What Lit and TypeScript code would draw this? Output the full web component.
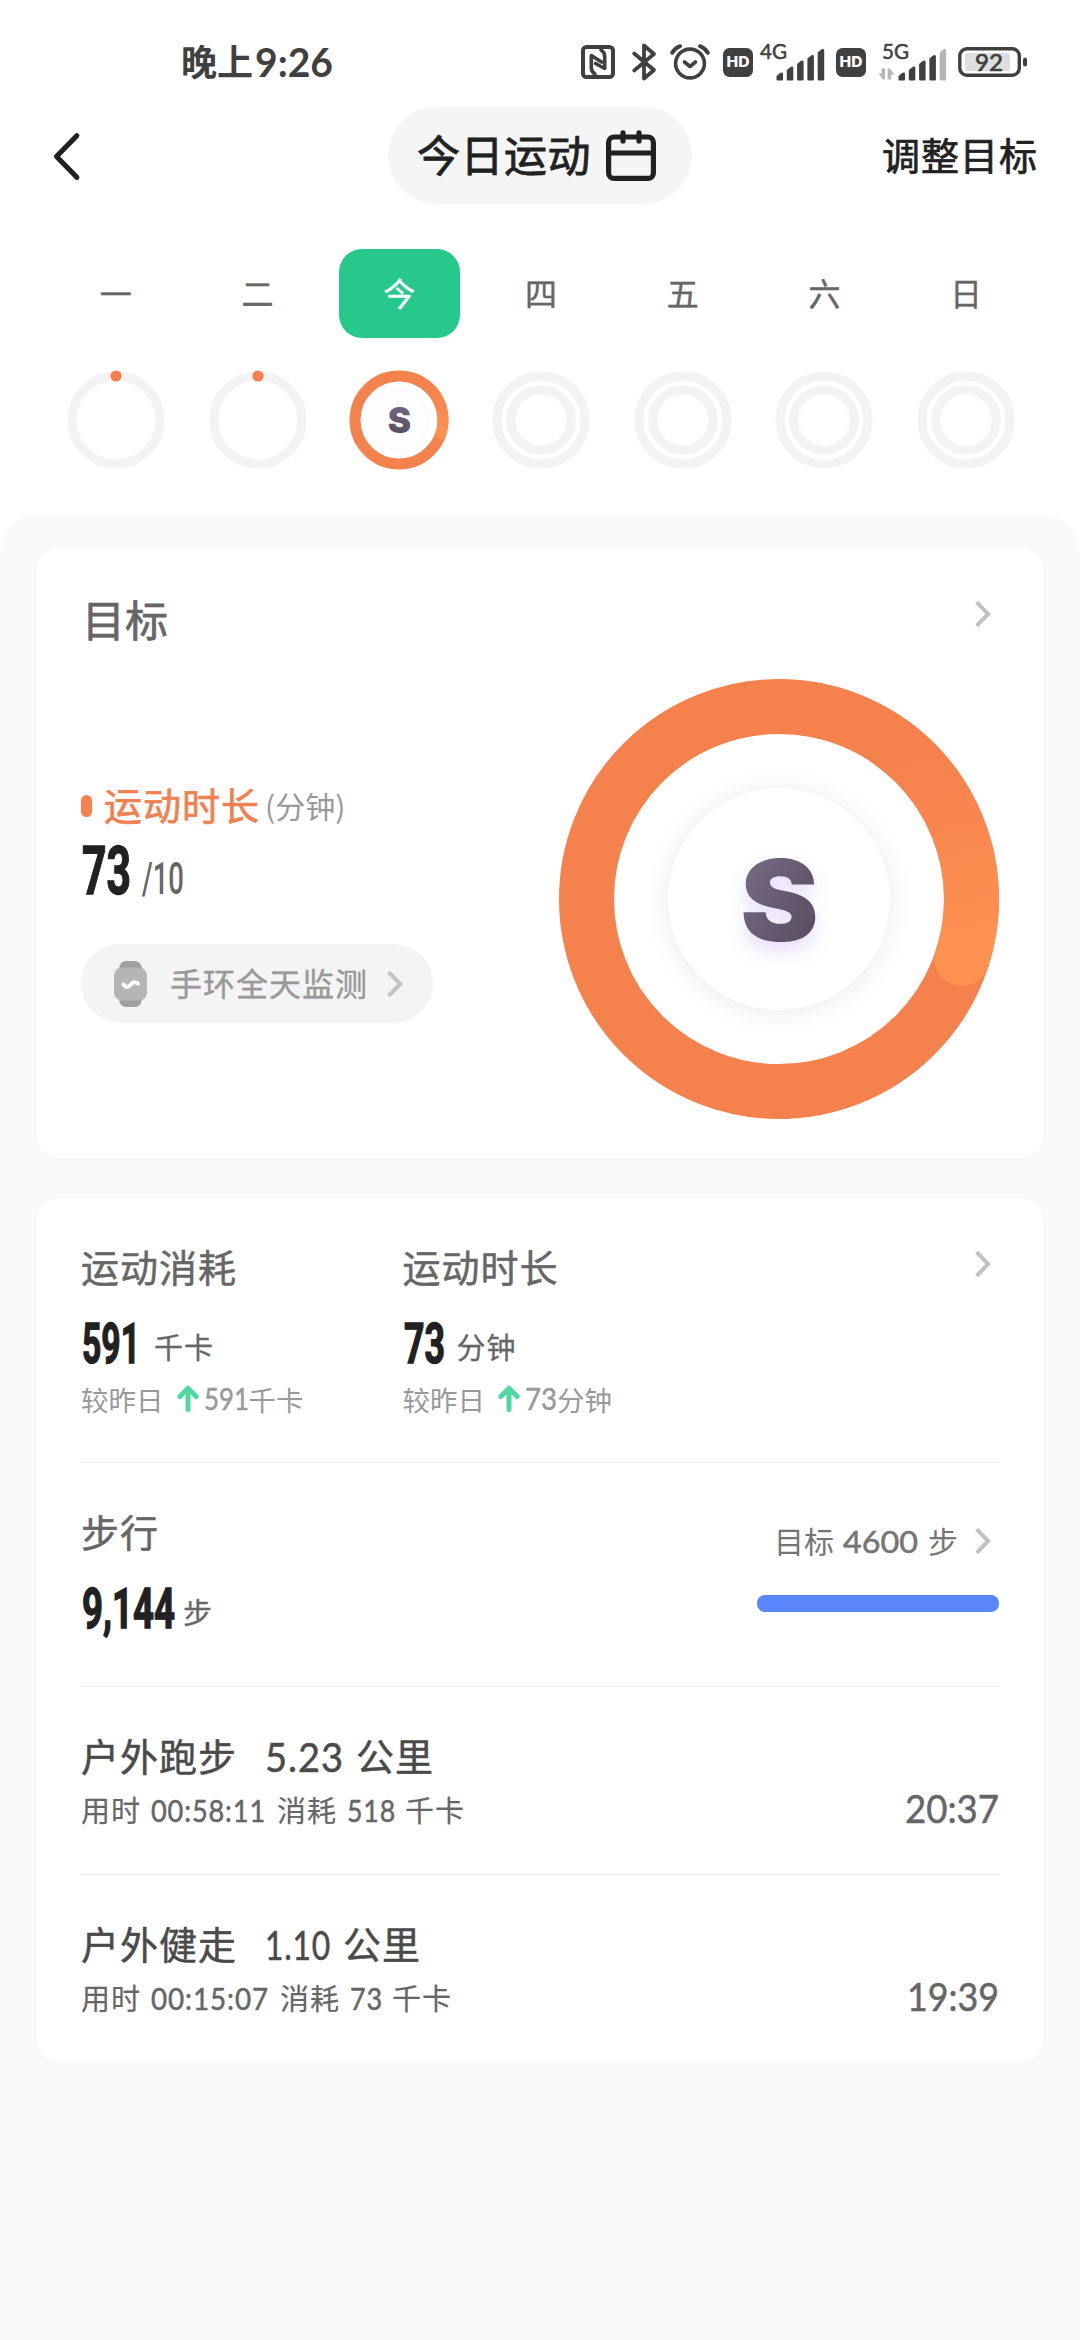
import { LitElement, html, css, svg, nothing } from "lit";
import { customElement, property } from "lit/decorators.js";

/** Digits drawn at an exact cap height and advance width. */
@customElement("fit-num")
class FitNum extends LitElement {
  @property() text = "";
  @property({ type: Number }) w = 0;
  @property({ type: Number }) h = 0;
  @property() face = "lato";
  static styles = css`
    :host { display: block; flex: none; }
    svg { display: block; overflow: visible; }
    text { fill: currentColor; }
    .lato { font-family: Lato, "Noto Sans CJK SC", sans-serif; font-weight: 400; stroke: currentColor; stroke-width: 0.5; }
    .bold { font-family: Lato, "Noto Sans CJK SC", sans-serif; font-weight: 700; }
    .din { font-family: Roboto, "Liberation Sans", sans-serif; font-weight: 700; stroke: currentColor; stroke-width: 1.4; }
    .thin { font-family: Roboto, "Liberation Sans", sans-serif; font-weight: 500; }
  `;
  render() {
    const ratio = this.face === "lato" || this.face === "bold" ? 0.725 : 0.711;
    const squeeze = this.face === "din" ? 0.62 : this.face === "thin" ? 0.66 : 1;
    return html`<svg width=${this.w} height=${this.h}>
      <text class=${this.face} x="0" y=${this.h} font-size=${this.h / ratio} transform="scale(${squeeze} 1)"
        textLength=${this.w / squeeze} lengthAdjust="spacingAndGlyphs">${this.text}</text>
    </svg>`;
  }
}

const num = (text: string, w: number, h: number, face = "lato") =>
  html`<fit-num .text=${text} .w=${w} .h=${h} .face=${face}></fit-num>`;

const chevron = html`<svg class="chev" width="20" height="30" viewBox="0 0 20 30">
  <path d="M3.600 3.200 15.200 15 3.600 26.800" fill="none" stroke="#c2c2c2" stroke-width="4" /></svg>`;

const arrowUp = html`<svg class="up" width="22" height="28" viewBox="0 0 22 28">
  <path d="M11 24.500V4M2.800 11.500 11 3.200l8.200 8.300" fill="none" stroke="#4fd8a4" stroke-width="5" stroke-linecap="round" stroke-linejoin="round" /></svg>`;

const hd = html`<svg class="hd" width="30" height="29" viewBox="0 0 30 29">
  <rect width="30" height="29" rx="6.500" fill="#404040" />
  <text x="3.600" y="19.300" font-family="Inter, Roboto, sans-serif" font-weight="800" font-size="14.500" fill="#fff" textLength="23" lengthAdjust="spacingAndGlyphs">HD</text></svg>`;

const signal = (label: string, lastOff: boolean, textX: number) => html`<svg class="sig" width="68" height="38" viewBox="0 0 68 38">
  <text x=${textX} y="16" font-family="Lato, sans-serif" font-weight="400" font-size="20.500" fill="#404040" stroke="#404040" stroke-width=".5" textLength="27" lengthAdjust="spacingAndGlyphs">${label}</text>
  ${[0, 1, 2, 3, 4].map((i) => {
    const x = 19.500 + i * 10.300;
    const top = [30, 24, 18, 12.500, 6.500][i];
    return svg`<path d="M${x} 36.500V${top + 3}l4-3.200q2.500-.8 2.500 1.200V36.500q0 1-1 1h-4.500q-1 0-1-1z" fill=${lastOff && i === 4 ? "#b5b5b5" : "#404040"} />`;
  })}
  ${lastOff
    ? svg`<path d="M6 25.500v11h-2l-4.500-6h3v-5zM8.700 36.500v-11h2l4.800 6h-3.300v5z" fill="#b5b5b5" />`
    : nothing}
</svg>`;

const ringS = (size: number) => html`<svg class="ring" width=${size} height=${size} viewBox="0 0 440 440">
  <defs>
    <linearGradient id="sg" x1="0" y1="0" x2="1" y2="1"><stop offset="0" stop-color="#7a7089" /><stop offset="1" stop-color="#54485a" /></linearGradient>
    <linearGradient id="rg" gradientUnits="userSpaceOnUse" x1="345" y1="80" x2="395" y2="280"><stop offset="0" stop-color="#f5814d" /><stop offset="1" stop-color="#ff9251" /></linearGradient>
    <filter id="soft" x="-30%" y="-30%" width="160%" height="160%"><feGaussianBlur stdDeviation="12" /></filter>
    <filter id="glow" x="-60%" y="-60%" width="220%" height="220%"><feDropShadow dx="0" dy="9" stdDeviation="9" flood-color="#8a5cf0" flood-opacity=".2" /></filter>
  </defs>
  <circle cx="220" cy="220" r="192.500" fill="none" stroke="#f5814d" stroke-width="55" />
  <path d="M333.100 64.300 A192.500 192.500 0 0 1 403.100 279.500" fill="none" stroke="url(#rg)" stroke-width="55" />
  <circle cx="403.100" cy="279.500" r="27.500" fill="#ff9251" />
  <circle cx="220" cy="222" r="113" fill="#000" opacity=".07" filter="url(#soft)" />
  <circle cx="220" cy="220" r="111" fill="#fff" />
  <g filter="url(#glow)"><text transform="translate(220.500 261.500) scale(1.050 1)" text-anchor="middle" font-family="Inter, 'Liberation Sans', sans-serif" font-weight="900" font-size="112" fill="url(#sg)">S</text></g>
</svg>`;

const dayRing = (kind: string) => {
  if (kind === "today")
    return html`<svg class="dr" width="100" height="100" viewBox="0 0 100 100">
      <defs><linearGradient id="dg" x1="0" y1="0" x2="0" y2="1"><stop offset="0" stop-color="#766c84" /><stop offset="1" stop-color="#55495c" /></linearGradient>
      <linearGradient id="da" x1="0" y1="0" x2="0" y2="1"><stop offset="0" stop-color="#f5814d" /><stop offset="1" stop-color="#ff9251" /></linearGradient></defs>
      <circle cx="50" cy="50" r="44" fill="none" stroke="#f5814d" stroke-width="11" />
      <path d="M76 14.500A44 44 0 0 1 91.800 63.600" fill="none" stroke="url(#da)" stroke-width="11" />
      <circle cx="91.800" cy="63.600" r="5.500" fill="#ff9251" />
      <circle cx="50" cy="50" r="29.500" fill="#fefdff" stroke="#faf9fb" stroke-width="1.500" />
      <text x="50.500" y="63" text-anchor="middle" font-family="Inter, 'Liberation Sans', sans-serif" font-weight="900" font-size="35" fill="url(#dg)">S</text></svg>`;
  return html`<svg class="dr" width="100" height="100" viewBox="0 0 100 100">
    <circle cx="50" cy="50" r="44" fill="none" stroke="#f3f3f3" stroke-width="9" />
    ${kind === "past"
      ? svg`<circle cx="50" cy="6" r="5.600" fill="#f5814d" />`
      : svg`<circle cx="50" cy="50" r="30.300" fill="none" stroke="#f3f3f3" stroke-width="9" />`}
  </svg>`;
};

@customElement("app-root")
class AppRoot extends LitElement {
  static styles = css`
    :host { display: block; width: 1080px; height: 2340px; background: #fff; overflow: hidden;
      font-family: "Noto Sans CJK SC", "Noto Sans", sans-serif; color: #666; }
    * { box-sizing: border-box; }
    svg { display: block; flex: none; overflow: visible; }
    span { white-space: nowrap; flex: none; }
    .status { height: 107px; padding: 17px 0 0 181px; display: flex; align-items: center; color: #404040; }
    .clock { display: flex; align-items: center; height: 90px; width: 400px; }
    .clock span { font-size: 36px; font-weight: 700; line-height: 40px; width: 74px; padding-bottom: 5px; }
    .bt { margin-left: 17px; }
    .al { margin-left: 13px; }
    .hd { margin-left: 13px; }
    .sig { margin: -1px 0 0 4px; }
    .hd2 { margin-left: -2px; }
    .sig2 { margin-left: 9px; }
    .bat { margin-left: 11px; }
    .head { height: 97px; padding: 0 42px; display: flex; align-items: center; justify-content: space-between; color: #212121; }
    .side { width: 300px; display: flex; padding-left: 9px; }
    .side.r { justify-content: flex-end; padding-left: 0; }
    .side.r span { font-size: 38px; letter-spacing: 1px; line-height: 44px; font-weight: 400; padding-bottom: 4px; -webkit-text-stroke: 0.7px currentColor; }
    .pill { width: 304px; height: 97px; border-radius: 49px; background: #f5f5f5; display: flex; align-items: center; padding-left: 29px; gap: 15px; }
    .pill span { font-size: 43px; letter-spacing: 0.5px; line-height: 50px; font-weight: 400; padding-bottom: 5px; -webkit-text-stroke: 0.8px currentColor; }
    .week { height: 310px; padding: 45px 43px 0 45px; display: grid; grid-template-columns: repeat(7, 1fr); align-content: start; justify-items: center; }
    .day { display: flex; flex-direction: column; align-items: center; gap: 32px; }
    .dn { width: 121px; height: 89px; border-radius: 23px; display: flex; align-items: center; justify-content: center; font-size: 32px; line-height: 40px; padding-bottom: 4px; -webkit-text-stroke: 0.4px currentColor; }
    .dn.on { background: #26c88b; color: #fff; }
    .panel { background: #fafafa; border-radius: 38px 38px 0 0; height: 1826px; padding: 34px 37px 0; display: flex; flex-direction: column; gap: 40px; }
    .card { background: #fff; border-radius: 22px; padding: 0 44px; box-shadow: 0 1px 6px rgba(0, 0, 0, 0.025); }
    .goal { height: 610px; }
    .ghead { height: 131px; display: flex; align-items: center; justify-content: space-between; padding-top: 12px; }
    .ghead span { font-size: 43px; line-height: 50px; font-weight: 400; -webkit-text-stroke: 0.7px currentColor; margin-left: 1px; padding-bottom: 4px; }
    .chev { margin-right: 6px; }
    .ghead .chev { margin-top: -12px; }
    .gbody { display: flex; justify-content: space-between; }
    .gleft { padding-top: 104px; }
    .gt { height: 46px; display: flex; align-items: center; }
    .bullet { width: 11px; height: 22px; border-radius: 5.5px; background: #f5814d; margin-right: 12px; }
    .gt .name { font-size: 38px; letter-spacing: 1px; color: #f0814f; line-height: 46px; padding-bottom: 4px; -webkit-text-stroke: 0.7px currentColor; }
    .gt .unit { font-size: 30px; color: #999; line-height: 46px; margin-left: 5px; padding-bottom: 3px; }
    .gn { display: flex; align-items: flex-end; gap: 11px; margin-top: 18px; }
    .black { color: #212121; margin-left: 1px; }
    .band { margin-top: 50px; width: 352px; height: 79px; border-radius: 40px; background: #f4f4f4; display: flex; align-items: center; padding-left: 33px; color: #999; }
    .band span { font-size: 32px; letter-spacing: 1px; line-height: 40px; margin: 0 17px 0 23px; padding-bottom: 4px; -webkit-text-stroke: 0.4px currentColor; }
    .list { height: 865px; }
    .sec { display: flex; justify-content: space-between; border-bottom: 1px solid #ececec; }
    .sec:last-child { border-bottom: 0; }
    .s1 { height: 265px; padding-top: 47px; }
    .s2 { height: 224px; padding-top: 47px; }
    .s3 { height: 188px; padding-top: 47px; }
    .cols { display: grid; grid-template-columns: 321.5px 300px; }
    .t { font-size: 38px; letter-spacing: 1px; line-height: 46px; height: 46px; display: flex; align-items: center; font-weight: 400; }
    .t span { padding-bottom: 4px; -webkit-text-stroke: 0.5px currentColor; }
    .n { height: 39px; margin-top: 33px; display: flex; align-items: center; }
    .n span { font-size: 29px; letter-spacing: 1px; line-height: 36px; padding-top: 5px; -webkit-text-stroke: 0.3px currentColor; }
    .d { height: 36px; margin-top: 18px; display: flex; align-items: center; font-size: 27.5px; color: #999; }
    .up { margin: 0 5px 0 13px; }
    .s1 .chev { margin-top: 4px; }
    .sr { width: 242px; padding-top: 13px; }
    .target { height: 36px; display: flex; align-items: center; justify-content: flex-end; font-size: 30px; color: #757575; }
    .target span { padding-bottom: 2px; }
    .bar { height: 17px; border-radius: 8px; background: #5a86fb; margin-top: 36px; }
    .act .t { color: #4a4a4a; }
    .u { height: 36px; margin-top: 12px; display: flex; align-items: center; font-size: 29px; letter-spacing: 1px; }
    .u span { padding-bottom: 3px; -webkit-text-stroke: 0.2px currentColor; }
    .time { padding-top: 61px; }
    .name4 { width: 184px; }
    .km { margin-left: 12px; }
    .use { width: 70px; }
    .burn { margin: 0 10px 0 11px; }
    .kc { margin-left: 9px; }
    .g14 { margin-left: 14px; }
    .g12 { margin-left: 12px; }
    .g9 { margin-left: 8px; }
    .goalw { margin-right: 9px; }
    .stepw { margin: 0 15px 0 10px; }
  `;

  private delta(value: string, w: number, unit: string) {
    return html`<div class="d"><span>较昨日</span>${arrowUp}${num(value, w, 22)}<span>${unit}</span></div>`;
  }

  private activity(name: string, dist: string, dw: number, dur: string, uw: number, kcal: string, kw: number, time: string, tw: number) {
    return html`<div class="sec s3 act">
      <div>
        <div class="t"><span class="name4">${name}</span>${num(dist, dw, 29)}<span class="km">公里</span></div>
        <div class="u"><span class="use">用时</span>${num(dur, uw, 22.5)}<span class="burn">消耗</span>${num(kcal, kw, 22.5)}<span class="kc">千卡</span></div>
      </div>
      <div class="time">${num(time, tw, 27.5)}</div>
    </div>`;
  }

  render() {
    const days: [string, string][] = [["一", "past"], ["二", "past"], ["今", "today"], ["四", "next"], ["五", "next"], ["六", "next"], ["日", "next"]];
    return html`
      <div class="status">
        <div class="clock"><span>晚上</span>${num("9:26", 78, 28.5, "bold")}</div>
        <svg width="34" height="34" viewBox="0 0 34 34" fill="none" stroke="#404040" stroke-width="4" stroke-linejoin="round" stroke-linecap="round">
          <rect x="2" y="2" width="30" height="30" rx="3.500" />
          <path d="M14 29Q10.300 27 10.300 22.500V10.500L20.500 17M20 5Q23.700 7 23.700 11.500V23.500L14.500 18.500" stroke-width="3.600" /></svg>
        <svg class="bt" width="25" height="38" viewBox="0 0 25 38" fill="none" stroke="#404040" stroke-width="3.800" stroke-linejoin="round" stroke-linecap="round">
          <path d="M2.200 10.500 22 27 12 35.500V2.500L22 11 2.200 27.500" /></svg>
        <svg class="al" width="40" height="36" viewBox="0 0 40 36" fill="none" stroke="#404040" stroke-width="3.600" stroke-linecap="round">
          <circle cx="20" cy="19.500" r="14.400" /><path d="M2.200 8.800Q5 4 10 2.200M37.800 8.800Q35 4 30 2.200" stroke-width="4" /><path d="M14.500 18l5.500 4.500 5.500-4.500" stroke-linejoin="round" /></svg>
        ${hd}${signal("4G", false, 3)}
        <div class="hd2">${hd}</div><div class="sig2">${signal("5G", true, 3)}</div>
        <svg class="bat" width="70" height="30" viewBox="0 0 70 30">
          <rect x="1.800" y="1.800" width="59.500" height="26.400" rx="7" fill="#fff" stroke="#404040" stroke-width="3.400" />
          <rect x="7" y="6" width="45" height="18" rx="3" fill="#dedede" />
          <rect x="65" y="10.500" width="4" height="9" rx="2" fill="#404040" />
          <text x="17" y="23.500" font-family="Lato, sans-serif" font-size="23.500" fill="#404040" stroke="#404040" stroke-width=".7" textLength="28" lengthAdjust="spacingAndGlyphs">92</text></svg>
      </div>

      <div class="head">
        <div class="side"><svg width="30" height="48" viewBox="0 0 30 48"><path d="M25.800 3.700 5.500 24.500 25.800 45.300" fill="none" stroke="#212121" stroke-width="5.200" stroke-linecap="round" stroke-linejoin="round" /></svg></div>
        <div class="pill"><span>今日运动</span>
          <svg width="50" height="51" viewBox="0 0 50 51" fill="none" stroke="#212121" stroke-width="5.200" stroke-linecap="round">
            <rect x="2.600" y="7" width="44.800" height="41.400" rx="5.500" /><path d="M3 23H47M17 2.800V11M33 2.800V11" /></svg>
        </div>
        <div class="side r"><span>调整目标</span></div>
      </div>

      <div class="week">${days.map(([n, k]) => html`<div class="day">
        <div class="dn ${k === "today" ? "on" : ""}">${n}</div>${dayRing(k)}</div>`)}
      </div>

      <div class="panel">
        <div class="card goal">
          <div class="ghead"><span>目标</span>${chevron}</div>
          <div class="gbody">
            <div class="gleft">
              <div class="gt"><div class="bullet"></div><span class="name">运动时长</span><span class="unit">(分钟)</span></div>
              <div class="gn"><div class="black">${num("73", 49, 47, "din")}</div>${num("/10", 42, 31, "thin")}</div>
              <div class="band">
                <svg width="33" height="46" viewBox="0 0 33 46"><path d="M5 8Q6 0 12 0h9q6 0 7 8v30q-1 8-7 8h-9q-6 0-7-8z" fill="#a0a0a0" /><rect y="6.500" width="33" height="33" rx="8" fill="#b5b5b5" />
                  <path d="M9.500 23.500q3.300 4.800 7 .3t7.500-1.300" fill="none" stroke="#fff" stroke-width="4" stroke-linecap="round" stroke-linejoin="round" /></svg>
                <span>手环全天监测</span>${chevron}
              </div>
            </div>
            ${ringS(440)}
          </div>
        </div>

        <div class="card list">
          <div class="sec s1">
            <div class="cols">
              <div><div class="t"><span>运动消耗</span></div>
                <div class="n"><div class="black">${num("591", 58, 39, "din")}</div><span class="g14">千卡</span></div>
                ${this.delta("591", 45, "千卡")}</div>
              <div><div class="t"><span>运动时长</span></div>
                <div class="n"><div class="black">${num("73", 41, 39, "din")}</div><span class="g12">分钟</span></div>
                ${this.delta("73", 32, "分钟")}</div>
            </div>
            ${chevron}
          </div>
          <div class="sec s2">
            <div><div class="t"><span>步行</span></div>
              <div class="n"><div class="black">${num("9,144", 93, 39, "din")}</div><span class="g9">步</span></div></div>
            <div class="sr">
              <div class="target"><span class="goalw">目标</span>${num("4600", 75, 22.5)}<span class="stepw">步</span>${chevron}</div>
              <div class="bar"></div>
            </div>
          </div>
          ${this.activity("户外跑步", "5.23", 79, "00:58:11", 115, "518", 49, "20:37", 94)}
          ${this.activity("户外健走", "1.10", 66, "00:15:07", 118, "73", 33, "19:39", 92)}
        </div>
      </div>
    `;
  }
}
